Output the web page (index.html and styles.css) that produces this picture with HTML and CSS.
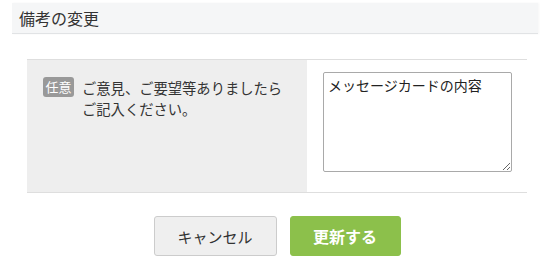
FILE: index.html
```html
<!DOCTYPE html>
<html lang="ja">
<head>
<meta charset="utf-8">
<link rel="stylesheet" href="styles.css">
</head>
<body>
<div class="page">
  <h2 class="section-title">備考の変更</h2>
  <div class="form-table">
    <div class="label-cell">
      <span class="badge">任意</span>
      <span class="label-text">ご意見、ご要望等ありましたら<br>ご記入ください。</span>
    </div>
    <div class="input-cell">
      <textarea class="note">メッセージカードの内容</textarea>
    </div>
  </div>
  <div class="actions">
    <button class="btn btn-cancel">キャンセル</button>
    <button class="btn btn-submit">更新する</button>
  </div>
</div>
</body>
</html>
```

FILE: styles.css
```css
* { box-sizing: border-box; }
html, body { margin: 0; padding: 0; background: #fff; }
body {
  font-family: "Noto Sans CJK JP", "Noto Sans", sans-serif;
  color: #333;
  width: 550px;
  height: 280px;
  overflow: hidden;
}
.page { padding-top: 3px; }
.section-title {
  margin: 0 12px;
  height: 31px;
  padding: 0 7px;
  background: #f5f6f7;
  border-bottom: 1px solid #e1e3e5;
  box-shadow: 1px 0 2px rgba(0,0,0,0.04);
  font-size: 16px;
  font-weight: normal;
  line-height: 30px;
  color: #333;
}
.form-table {
  margin: 25px 23px 0 27px;
  display: flex;
  border-top: 1px solid #dedede;
  border-bottom: 1px solid #dedede;
  height: 134px;
}
.label-cell {
  width: 280px;
  background: #eeeeee;
  padding: 17px 16px;
  display: flex;
  align-items: flex-start;
  gap: 8px;
}
.badge {
  flex: none;
  width: 31px;
  height: 20px;
  background: #999;
  color: #fff;
  border-radius: 3px;
  font-size: 13px;
  line-height: 20px;
  text-align: center;
  margin-top: 0;
}
.label-text {
  font-size: 14.3px;
  line-height: 21px;
  color: #333;
}
.input-cell {
  flex: 1;
  padding: 12px 15px 0 16px;
}
.note {
  display: block;
  width: 189px;
  height: 100px;
  border: 1px solid #a9a9a9;
  border-radius: 2px;
  padding: 2px 4px;
  font-family: "Noto Sans CJK JP", sans-serif;
  font-size: 14px;
  line-height: 20px;
  color: #222;
  resize: vertical;
  margin: 0;
}
.actions {
  display: flex;
  justify-content: center;
  gap: 13px;
  margin-top: 23px;
  padding-left: 4px;
}
.btn {
  height: 40px;
  border-radius: 3px;
  font-family: "Noto Sans CJK JP", sans-serif;
  margin: 0;
  padding: 0;
}
.btn-cancel {
  width: 123px;
  background: #efefef;
  border: 1px solid #cccccc;
  color: #333;
  font-size: 15px;
}
.btn-submit {
  width: 111px;
  background: #8cc04b;
  border: 1px solid #8cc04b;
  color: #fff;
  font-size: 16px;
  font-weight: bold;
}
```
